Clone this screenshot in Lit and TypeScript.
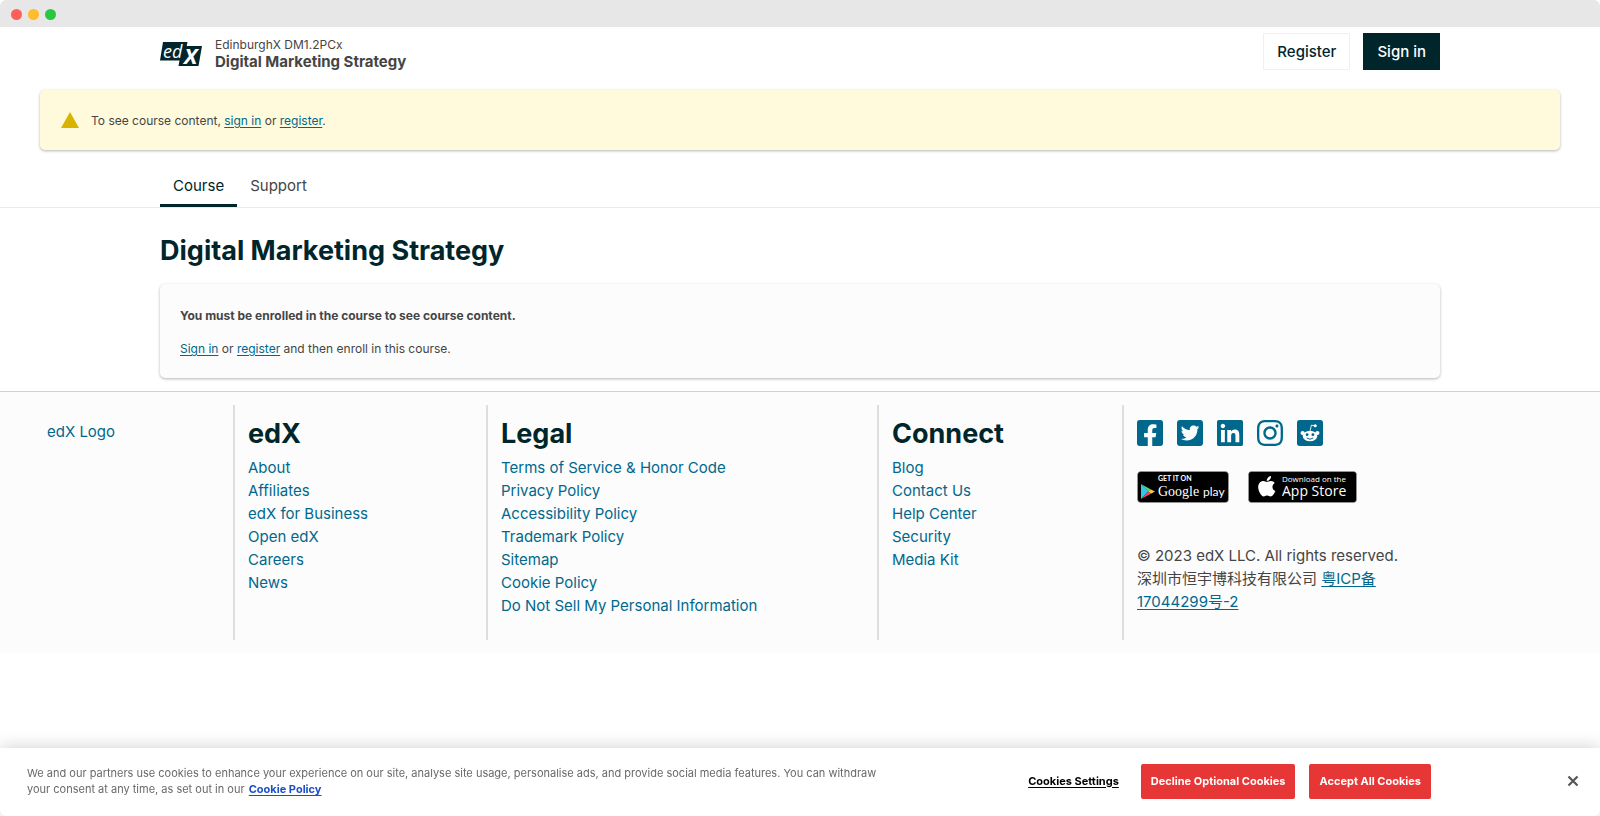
import { LitElement, html, css, svg } from "lit";
import { customElement } from "lit/decorators.js";

interface LinkColumn {
  title: string;
  links: string[];
}

const COLUMNS: LinkColumn[] = [
  { title: "edX", links: ["About", "Affiliates", "edX for Business", "Open edX", "Careers", "News"] },
  {
    title: "Legal",
    links: [
      "Terms of Service & Honor Code",
      "Privacy Policy",
      "Accessibility Policy",
      "Trademark Policy",
      "Sitemap",
      "Cookie Policy",
      "Do Not Sell My Personal Information",
    ],
  },
  { title: "Connect", links: ["Blog", "Contact Us", "Help Center", "Security", "Media Kit"] },
];

const SOCIAL = [
  {
    name: "Facebook",
    art: svg`<path d="M400 32H48A48 48 0 0 0 0 80v352a48 48 0 0 0 48 48h137.25V327.69h-63V256h63v-54.64c0-62.15 37-96.48 93.67-96.48 27.14 0 55.52 4.84 55.52 4.84v61h-31.27c-30.81 0-40.42 19.12-40.42 38.73V256h68.78l-11 71.69h-57.78V480H400a48 48 0 0 0 48-48V80a48 48 0 0 0-48-48z"/>`,
  },
  {
    name: "Twitter",
    art: svg`<path d="M400 32H48C21.5 32 0 53.5 0 80v352c0 26.5 21.5 48 48 48h352c26.5 0 48-21.5 48-48V80c0-26.5-21.5-48-48-48zm-48.9 158.8c.2 2.8.2 5.7.2 8.5 0 86.7-66 186.6-186.6 186.6-37.2 0-71.7-10.8-100.7-29.4 5.3.6 10.4.8 15.8.8 30.7 0 58.9-10.4 81.4-28-28.8-.6-53-19.5-61.3-45.5 10.1 1.5 19.2 1.5 29.6-1.2-30-6.1-52.5-32.5-52.5-64.4v-.8c8.7 4.9 18.9 7.9 29.6 8.3a65.447 65.447 0 0 1-29.2-54.6c0-12.2 3.2-23.4 8.9-33.1 32.3 39.8 80.8 65.8 135.2 68.6-9.3-44.5 24-80.6 64-80.6 18.9 0 35.9 7.9 47.9 20.7 14.8-2.8 29-8.3 41.6-15.8-4.9 15.2-15.2 28-28.8 36.1 13.2-1.4 26-5.1 37.8-10.2-8.9 13.1-20.1 24.7-32.9 34z"/>`,
  },
  {
    name: "LinkedIn",
    art: svg`<path d="M416 32H31.9C14.3 32 0 46.5 0 64.3v383.4C0 465.5 14.3 480 31.9 480H416c17.6 0 32-14.5 32-32.3V64.3c0-17.8-14.4-32.3-32-32.3zM135.4 416H69V202.2h66.5V416zm-33.2-243c-21.3 0-38.5-17.3-38.5-38.5S80.9 96 102.2 96c21.2 0 38.5 17.3 38.5 38.5 0 21.3-17.2 38.5-38.5 38.5zm282.1 243h-66.4V312c0-24.8-.5-56.7-34.5-56.7-34.6 0-39.9 27-39.9 54.9V416h-66.4V202.2h63.7v29.2h.9c8.9-16.8 30.6-34.5 62.9-34.5 67.2 0 79.7 44.3 79.7 101.9V416z"/>`,
  },
  {
    name: "Instagram",
    art: svg`<path d="M224.1 141c-63.6 0-114.9 51.3-114.9 114.9s51.3 114.9 114.9 114.9S339 319.5 339 255.9 287.7 141 224.1 141zm0 189.6c-41.1 0-74.7-33.5-74.7-74.7s33.5-74.7 74.7-74.7 74.7 33.5 74.7 74.7-33.6 74.7-74.7 74.7zm146.4-194.3c0 14.9-12 26.8-26.8 26.8-14.9 0-26.8-12-26.8-26.8s12-26.8 26.8-26.8 26.8 12 26.8 26.8zm76.1 27.2c-1.7-35.9-9.9-67.7-36.2-93.9-26.2-26.2-58-34.4-93.9-36.2-37-2.1-147.9-2.1-184.9 0-35.8 1.7-67.6 9.9-93.9 36.1s-34.4 58-36.2 93.9c-2.1 37-2.1 147.9 0 184.9 1.7 35.9 9.9 67.7 36.2 93.9s58 34.4 93.9 36.2c37 2.1 147.9 2.1 184.9 0 35.9-1.7 67.7-9.9 93.9-36.2 26.2-26.2 34.4-58 36.2-93.9 2.1-37 2.1-147.8 0-184.8zM398.8 388c-7.8 19.6-22.9 34.7-42.6 42.6-29.5 11.7-99.5 9-132.1 9s-102.7 2.6-132.1-9c-19.6-7.8-34.7-22.9-42.6-42.6-11.7-29.5-9-99.5-9-132.1s-2.6-102.7 9-132.1c7.8-19.6 22.9-34.7 42.6-42.6 29.5-11.7 99.5-9 132.1-9s102.7-2.6 132.1 9c19.6 7.8 34.7 22.9 42.6 42.6 11.7 29.5 9 99.5 9 132.1s2.7 102.7-9 132.1z"/>`,
  },
  {
    name: "Reddit",
    art: svg`<rect y="32" width="448" height="448" rx="48"/>
      <g fill="#fff">
        <ellipse cx="224" cy="308" rx="126" ry="92"/>
        <circle cx="97" cy="256" r="36"/><circle cx="351" cy="256" r="36"/>
        <circle cx="314" cy="131" r="27"/>
      </g>
      <path d="M226 218l22-98 62 13" fill="none" stroke="#fff" stroke-width="15" stroke-linejoin="round"/>
      <circle cx="174" cy="284" r="25"/><circle cx="274" cy="284" r="25"/>
      <path d="M174 346q50 40 100 0" fill="none" stroke="#00688d" stroke-width="17" stroke-linecap="round"/>`,
  },
];

@customElement("app-root")
export class AppRoot extends LitElement {
  static styles = css`
    :host {
      display: block;
      min-height: 100vh;
      background: #fff;
      color: #454545;
      font-family: Inter, "Noto Sans CJK SC", sans-serif;
      font-size: 15px;
      line-height: 23px;
    }
    * { box-sizing: border-box; }
    h1, h2, p, ul { margin: 0; padding: 0; }
    ul { list-style: none; }
    svg { display: block; overflow: visible; }
    a { color: #00688d; text-decoration: none; }
    button { font: inherit; cursor: pointer; }
    .inline { text-decoration: underline; text-underline-offset: 2px; }
    .titlebar {
      display: flex;
      align-items: center;
      gap: 6px;
      height: 27px;
      padding: 1px 11px 0;
      background: #e7e7e7;
      border-radius: 6px 6px 0 0;
    }
    .dot { width: 11px; height: 11px; border-radius: 50%; }
    .red { background: #ff5f57; }
    .amber { background: #febc2e; }
    .green { background: #28c840; }
    .container { width: 80%; margin: 0 auto; }
    .header { display: flex; align-items: flex-start; height: 52px; padding-top: 6px; }
    .brand { flex: 1; display: flex; align-items: center; gap: 13px; padding-top: 4px; }
    .org { font-size: 12px; line-height: 16px; }
    .course { font-size: 15px; line-height: 18px; font-weight: 700; color: #454545; }
    .auth { display: flex; gap: 13px; }
    .btn {
      height: 37px;
      padding: 0 13px;
      border: 1px solid #f0f0f0;
      background: #fff;
      color: #00262b;
      font-weight: 500;
    }
    .btn-dark { background: #00262b; border-color: #00262b; color: #fff; }
    .alert {
      display: flex;
      align-items: center;
      gap: 12px;
      height: 60px;
      margin: 11px 40px 0;
      padding: 0 21px;
      border-radius: 5px;
      background: #fffadb;
      box-shadow: 0 1px 3px rgba(0, 0, 0, 0.3);
      font-size: 12px;
    }
    .tabs { margin-top: 16px; border-bottom: 1px solid #ebebeb; }
    .tablist { display: flex; }
    .tab {
      padding: 8px 13px 7px;
      border-bottom: 3px solid transparent;
      color: #454545;
    }
    .active { color: #00262b; border-color: #00262b; }
    .title { margin-top: 27px; font-size: 27px; line-height: 32px; font-weight: 700; color: #00262b; }
    .card {
      margin: 17px 0 13px;
      padding: 20px 20px 18px;
      border-radius: 5px;
      background: #fcfcfc;
      box-shadow: 0 1px 3px rgba(0, 0, 0, 0.3);
      font-size: 12px;
    }
    .card p + p { margin-top: 10px; }
    .strong { font-weight: 700; }
    .footer {
      display: grid;
      grid-template-columns: 233fr 253fr 391fr 245fr 478fr;
      padding: 13px 0;
      border-top: 1px solid #cfd2d3;
      background: #fcfcfc;
    }
    .col { min-height: 235px; padding: 13px; }
    .col + .col { border-left: 2px solid #dedede; }
    .logo-col { padding: 15px 47px; }
    .heading { margin-bottom: 6px; font-size: 27px; line-height: 32px; font-weight: 700; color: #00262b; }
    .social { display: flex; gap: 14px; padding-top: 2px; fill: #00688d; }
    .stores { display: flex; gap: 19px; margin: 25px 0 41px; }
    .legal { max-width: 280px; }
    .cookies {
      position: fixed;
      left: 0;
      right: 0;
      bottom: 0;
      display: flex;
      align-items: center;
      min-height: 68px;
      padding: 0 21px 2px 27px;
      background: #fff;
      box-shadow: 0 0 18px rgba(0, 0, 0, 0.2);
      border-radius: 0 0 6px 6px;
    }
    .notice { width: 850px; color: #696969; font-size: 11px; line-height: 16px; }
    .policy { margin-left: 1px; color: #1b4fc7; font-weight: 700; }
    .choices { flex: 1; display: flex; justify-content: flex-end; align-items: center; gap: 14px; font-size: 11px; font-weight: 700; }
    .settings { padding: 0; margin-right: 8px; border: 0; background: none; color: #000; text-decoration: underline; text-underline-offset: 2px; }
    .choice { height: 35px; padding: 0 10px; border: 0; border-radius: 2px; background: #e73636; color: #fff; }
    .close { margin-left: 136px; padding: 0; border: 0; background: none; }
  `;

  private renderColumn(column: LinkColumn) {
    return html`<nav class="col" aria-label=${column.title}>
      <h2 class="heading">${column.title}</h2>
      <ul>
        ${column.links.map((label) => html`<li><a href="#">${label}</a></li>`)}
      </ul>
    </nav>`;
  }

  private renderPlayBadge() {
    return html`<svg width="92" height="32" viewBox="0 0 92 32" role="img" aria-label="Get it on Google play">
      <rect x=".5" y=".5" width="91" height="31" rx="3.5" fill="#000" stroke="#a6a6a6" stroke-width=".5"/>
      <path d="M4 13v15l7-7.500z" fill="#35c5e8"/>
      <path d="M4 13l10 5.500-3 2.200z" fill="#4fd186"/>
      <path d="M14 18.500l4 2-4 2.200-3-2.200z" fill="#f8c640"/>
      <path d="M4 28l10-5.300-3-2.200z" fill="#ee4664"/>
      <g fill="#fff">
        <text x="21" y="10" font-size="7" font-weight="700" font-family="Lato, sans-serif">GET IT ON</text>
        <text x="21" y="25" font-size="14" font-family="Liberation Serif, serif">Google</text>
        <text x="66" y="25" font-size="12" font-family="Lato, sans-serif">play</text>
      </g>
    </svg>`;
  }

  private renderAppleBadge() {
    return html`<svg width="109" height="32" viewBox="0 0 109 32" role="img" aria-label="Download on the App Store">
      <rect x=".5" y=".5" width="108" height="31" rx="3" fill="#000" stroke="#a6a6a6" stroke-width=".5"/>
      <g transform="translate(10 3.600) scale(.0455)" fill="#fff">
        <path d="M318.700 268.700c-.2-36.700 16.400-64.400 50-84.800-18.800-26.900-47.200-41.700-84.700-44.600-35.500-2.800-74.300 20.700-88.500 20.700-15 0-49.400-19.700-76.400-19.700C63.300 141.200 4 184.800 4 273.500q0 39.300 14.400 81.200c12.800 36.700 59 126.700 107.200 125.200 25.200-.6 43-17.900 75.800-17.900 31.800 0 48.300 17.900 76.400 17.900 48.600-.7 90.400-82.500 102.600-119.300-65.200-30.700-61.700-90-61.700-91.900zm-56.600-164.200c27.300-32.400 24.800-61.900 24-72.500-24.100 1.400-52 16.400-67.900 34.900-17.500 19.800-27.800 44.300-25.600 71.900 26.100 2 49.900-11.400 69.500-34.300z"/>
      </g>
      <g fill="#fff" font-family="Open Sans, sans-serif">
        <text x="34" y="11" font-size="8">Download on the</text>
        <text x="34" y="25" font-size="14" font-weight="500">App Store</text>
      </g>
    </svg>`;
  }

  render() {
    return html`
      <div class="titlebar">
        <span class="dot red"></span><span class="dot amber"></span><span class="dot green"></span>
      </div>
      <header class="container header">
        <div class="brand">
          <svg width="42" height="24" viewBox="0 0 42 24" role="img" aria-label="edX">
            <path d="M3 0H27.500L26.700 4H42L38.500 24H18.500L19.500 18.500H0z" fill="#00262b"/>
            <g fill="#fff" font-family="Open Sans, sans-serif" font-style="italic">
              <text x="3" y="16" font-size="18">ed</text>
              <text x="24" y="22" font-size="22" font-weight="700">X</text>
            </g>
          </svg>
          <div>
            <div class="org">EdinburghX DM1.2PCx</div>
            <div class="course">Digital Marketing Strategy</div>
          </div>
        </div>
        <div class="auth">
          <button class="btn">Register</button>
          <button class="btn btn-dark">Sign in</button>
        </div>
      </header>
      <div class="alert" role="alert">
        <svg width="18" height="16" viewBox="0 0 18 16"><path d="M9 0l9 16H0z" fill="#d8b400"/></svg>
        <span>To see course content, <a class="inline" href="#">sign in</a> or <a class="inline" href="#">register</a>.</span>
      </div>
      <nav class="tabs" aria-label="Course pages">
        <div class="container tablist">
          <a class="tab active" href="#">Course</a>
          <a class="tab" href="#">Support</a>
        </div>
      </nav>
      <main class="container">
        <h1 class="title">Digital Marketing Strategy</h1>
        <section class="card">
          <p class="strong">You must be enrolled in the course to see course content.</p>
          <p><a class="inline" href="#">Sign in</a> or <a class="inline" href="#">register</a> and then enroll in this course.</p>
        </section>
      </main>
      <footer class="footer">
        <div class="col logo-col"><a href="#">edX Logo</a></div>
        ${COLUMNS.map((column) => this.renderColumn(column))}
        <div class="col">
          <div class="social">
            ${SOCIAL.map(
              (item) => html`<a href="#" aria-label=${item.name}><svg width="26" height="26" viewBox="0 32 448 448">${item.art}</svg></a>`
            )}
          </div>
          <div class="stores">
            <a href="#">${this.renderPlayBadge()}</a>
            <a href="#">${this.renderAppleBadge()}</a>
          </div>
          <p class="legal">© 2023 edX LLC. All rights reserved.<br />深圳市恒宇博科技有限公司 <a class="inline" href="#">粤ICP备17044299号-2</a></p>
        </div>
      </footer>
      <section class="cookies" aria-label="Cookie consent">
        <p class="notice">
          We and our partners use cookies to enhance your experience on our site, analyse site usage, personalise ads, and
          provide social media features. You can withdraw your consent at any time, as set out in our
          <a class="inline policy" href="#">Cookie Policy</a>
        </p>
        <div class="choices">
          <button class="settings">Cookies Settings</button>
          <button class="choice">Decline Optional Cookies</button>
          <button class="choice">Accept All Cookies</button>
        </div>
        <button class="close" aria-label="Close">
          <svg width="12" height="12" viewBox="0 0 12 12"><path d="M1.500 1.500l9 9M10.500 1.500l-9 9" stroke="#565656" stroke-width="2.200"/></svg>
        </button>
      </section>
    `;
  }
}
